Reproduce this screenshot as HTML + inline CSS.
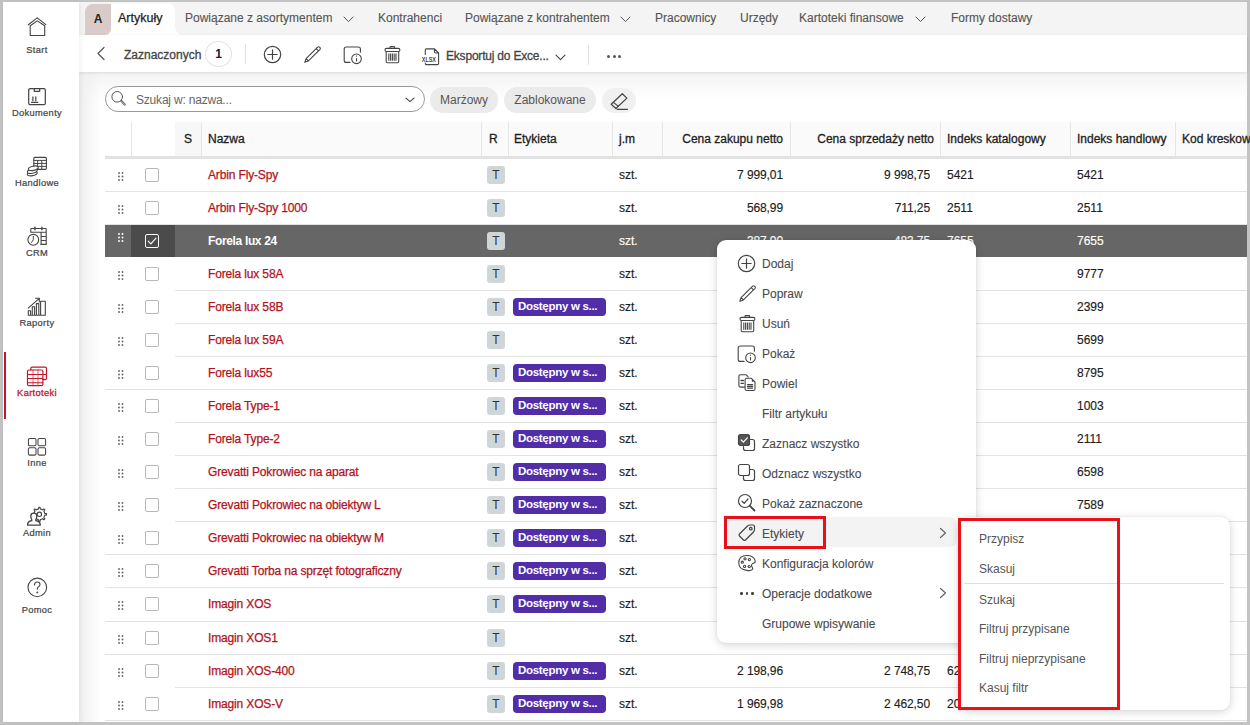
<!DOCTYPE html><html><head><meta charset="utf-8"><style>
*{margin:0;padding:0;box-sizing:border-box}
html,body{width:1250px;height:725px;overflow:hidden;background:#c3c3c3;font-family:"Liberation Sans", sans-serif;position:relative}
.a{position:absolute}
.t{position:absolute;white-space:nowrap;line-height:1}
</style></head><body>
<div class="a" style="left:3px;top:2px;width:1244px;height:720px;background:#fff;overflow:hidden"></div>
<div class="a" style="left:79px;top:72px;width:1168px;height:28px;background:linear-gradient(#f3f3f3,#fff)"></div>
<div class="a" style="left:79px;top:72px;width:22px;height:650px;background:linear-gradient(90deg,#efefef,rgba(255,255,255,0))"></div>
<div class="a" style="left:79px;top:2px;width:1168px;height:33px;background:#f4f4f4"></div>
<div class="a" style="left:104px;top:28px;width:8px;height:7px;background:#fff"></div>
<div class="a" style="left:85px;top:4px;width:26px;height:31px;background:#d8cbc9;border-radius:8px 0 6px 0"></div>
<div class="a" style="left:111px;top:3px;width:64px;height:32px;background:#fff;border-radius:0 8px 0 0"></div>
<div class="a" style="left:174px;top:27px;width:8px;height:8px;background:#fff"></div>
<div class="a" style="left:175px;top:3px;width:20px;height:32px;background:#f4f4f4;border-radius:0 0 0 8px"></div>
<div class="t" style="left:-102px;width:400px;text-align:center;top:12.80px;font-size:12px;color:#222;font-weight:bold;letter-spacing:0px;">A</div>
<div class="t" style="left:118px;top:11.88px;font-size:12.5px;color:#222;font-weight:normal;letter-spacing:0px;;-webkit-text-stroke:0.25px #222">Artykuły</div>
<div class="t" style="left:185px;top:12.30px;font-size:12px;color:#555;font-weight:normal;letter-spacing:0px;;-webkit-text-stroke:0.12px #555">Powiązane z asortymentem</div>
<svg class="a" style="left:342.5px;top:16px;" width="11" height="6.6" viewBox="0 0 11 6.6" fill="none" stroke="#555" stroke-width="1.0" stroke-linecap="round" stroke-linejoin="round"><path d="M1,1 L5.5,5.6 L10,1"/></svg>
<div class="t" style="left:378px;top:12.30px;font-size:12px;color:#555;font-weight:normal;letter-spacing:0px;;-webkit-text-stroke:0.12px #555">Kontrahenci</div>
<div class="t" style="left:465px;top:12.30px;font-size:12px;color:#555;font-weight:normal;letter-spacing:0px;;-webkit-text-stroke:0.12px #555">Powiązane z kontrahentem</div>
<svg class="a" style="left:619.5px;top:16px;" width="11" height="6.6" viewBox="0 0 11 6.6" fill="none" stroke="#555" stroke-width="1.0" stroke-linecap="round" stroke-linejoin="round"><path d="M1,1 L5.5,5.6 L10,1"/></svg>
<div class="t" style="left:655px;top:12.30px;font-size:12px;color:#555;font-weight:normal;letter-spacing:0px;;-webkit-text-stroke:0.12px #555">Pracownicy</div>
<div class="t" style="left:740px;top:12.30px;font-size:12px;color:#555;font-weight:normal;letter-spacing:0px;;-webkit-text-stroke:0.12px #555">Urzędy</div>
<div class="t" style="left:799px;top:12.30px;font-size:12px;color:#555;font-weight:normal;letter-spacing:0px;;-webkit-text-stroke:0.12px #555">Kartoteki finansowe</div>
<svg class="a" style="left:914.5px;top:16px;" width="11" height="6.6" viewBox="0 0 11 6.6" fill="none" stroke="#555" stroke-width="1.0" stroke-linecap="round" stroke-linejoin="round"><path d="M1,1 L5.5,5.6 L10,1"/></svg>
<div class="t" style="left:951px;top:12.30px;font-size:12px;color:#555;font-weight:normal;letter-spacing:0px;;-webkit-text-stroke:0.12px #555">Formy dostawy</div>
<div class="a" style="left:79px;top:35px;width:1168px;height:37px;background:#fff;box-shadow:0 1px 3px rgba(0,0,0,0.10)"></div>
<svg class="a" style="left:95px;top:46px;" width="12" height="15" viewBox="0 0 12 15" fill="none" stroke="#555" stroke-width="1.2" stroke-linecap="round" stroke-linejoin="round"><path d="M9,1.5 L3,7.5 L9,13.5"/></svg>
<div class="t" style="left:124px;top:48.60px;font-size:12px;color:#444;font-weight:normal;letter-spacing:0px;;-webkit-text-stroke:0.3px #444">Zaznaczonych</div>
<div class="a" style="left:205px;top:41px;width:27px;height:26px;border:1px solid #e3e3e3;border-radius:50%;background:#fff"></div>
<div class="t" style="left:18.5px;width:400px;text-align:center;top:48.30px;font-size:12px;color:#1b1b2b;font-weight:bold;letter-spacing:0px;">1</div>
<div class="a" style="left:245px;top:44px;width:1px;height:20px;background:#e0e0e0"></div>
<div class="a" style="left:588px;top:45px;width:1px;height:20px;background:#e0e0e0"></div>
<svg class="a" style="left:263px;top:45.2px;" width="19" height="19" viewBox="0 0 19 19" fill="none" stroke="#444" stroke-width="1.2" stroke-linecap="round" stroke-linejoin="round"><circle cx="9.5" cy="9.5" r="8.2"/><path d="M9.5,4.8 V14.2 M4.8,9.5 H14.2"/></svg>
<svg class="a" style="left:303px;top:46px;" width="18" height="18" viewBox="0 0 18 18" fill="none" stroke="#444" stroke-width="1.1" stroke-linecap="round" stroke-linejoin="round"><path d="M1.8,16.2 L3.1,12.6 L14.4,1.3 Q15.6,0.2 16.8,1.3 Q17.9,2.4 16.8,3.6 L5.4,14.9 Z M3.1,12.6 L5.4,14.9 M13.2,2.6 L15.5,4.9"/></svg>
<svg class="a" style="left:343px;top:45px;" width="19" height="20" viewBox="0 0 19 20" fill="none" stroke="#444" stroke-width="1.1" stroke-linecap="round" stroke-linejoin="round"><path d="M7,17.4 H3.2 Q1.2,17.4 1.2,15.4 V4 Q1.2,2 3.2,2 H15.4 Q17.4,2 17.4,4 V7.3"/><circle cx="13.5" cy="13.8" r="4.8"/><path d="M13.5,13.1 V16.4" stroke-linecap="butt"/><circle cx="13.5" cy="11.1" r="0.65" fill="#444" stroke="none"/></svg>
<svg class="a" style="left:384px;top:45px;" width="17" height="19" viewBox="0 0 17 19" fill="none" stroke="#444" stroke-width="1.1" stroke-linecap="round" stroke-linejoin="round"><rect x="1" y="3.4" width="14.9" height="3.1" rx="1.5"/><path d="M6,3.4 V2.3 Q6,1.6 6.7,1.6 H9.9 Q10.6,1.6 10.6,2.3 V3.4"/><path d="M2.2,6.5 V16.5 Q2.2,17.7 3.4,17.7 H13.5 Q14.7,17.7 14.7,16.5 V6.5"/><path d="M4.8,8.6 V15.8 M6.6,8.6 V15.8 M8.4,8.6 V15.8 M10.2,8.6 V15.8 M12,8.6 V15.8" stroke-width="1.1" stroke-linecap="butt"/></svg>
<svg class="a" style="left:421px;top:44px;" width="20" height="22" viewBox="0 0 20 22" fill="none" stroke="#444" stroke-width="1.1" stroke-linecap="round" stroke-linejoin="round"><path d="M4.3,10.5 V6 Q4.3,4.9 5.4,4.9 H13.5 L17.6,9 V19.5 Q17.6,20.6 16.5,20.6 H5.4 Q4.3,20.6 4.3,19.5 V19 M13.5,4.9 V7.8 Q13.5,9 14.7,9 H17.6"/><text x="0.8" y="17.7" font-family="Liberation Sans" font-weight="bold" font-size="7.2" fill="#444" stroke="none" textLength="14.2" lengthAdjust="spacingAndGlyphs">XLSX</text></svg>
<div class="t" style="left:446px;top:49.80px;font-size:12px;color:#444;font-weight:normal;letter-spacing:-0.2px;;-webkit-text-stroke:0.3px #444">Eksportuj do Exce...</div>
<svg class="a" style="left:555px;top:54px;" width="11" height="7" viewBox="0 0 11 7" fill="none" stroke="#444" stroke-width="1.1" stroke-linecap="round" stroke-linejoin="round"><path d="M1,1.2 L5.5,5.6 L10,1.2"/></svg>
<div class="a" style="left:607px;top:55.2px;width:3px;height:3px;border-radius:50%;background:#555"></div>
<div class="a" style="left:612.5px;top:55.2px;width:3px;height:3px;border-radius:50%;background:#555"></div>
<div class="a" style="left:618px;top:55.2px;width:3px;height:3px;border-radius:50%;background:#555"></div>
<div class="a" style="left:105px;top:86px;width:320px;height:26px;border:1px solid #9a9a9a;border-radius:13px;background:#fff"></div>
<svg class="a" style="left:111px;top:89px;" width="18" height="18" viewBox="0 0 18 18" fill="none" stroke="#555" stroke-width="1.0" stroke-linecap="round" stroke-linejoin="round"><circle cx="6.2" cy="7.8" r="5.3"/><path d="M10.2,11.8 L13.8,15.6" stroke-width="2.1"/><path d="M10.2,11.8 L13.8,15.6" stroke-width="0.6" stroke="#fff"/></svg>
<div class="t" style="left:136px;top:93.80px;font-size:12px;color:#666;font-weight:normal;letter-spacing:-0.2px;">Szukaj w: nazwa...</div>
<svg class="a" style="left:405px;top:97px;" width="10" height="6" viewBox="0 0 10 6" fill="none" stroke="#444" stroke-width="1.1" stroke-linecap="round" stroke-linejoin="round"><path d="M1,1.2 L5,4.6 L9,1.2"/></svg>
<div class="a" style="left:430px;top:87px;width:68px;height:26px;border-radius:13px;background:#ebebeb"></div>
<div class="t" style="left:264px;width:400px;text-align:center;top:94.30px;font-size:12px;color:#555;font-weight:normal;letter-spacing:0px;">Marżowy</div>
<div class="a" style="left:504px;top:87px;width:92px;height:26px;border-radius:13px;background:#ebebeb"></div>
<div class="t" style="left:350px;width:400px;text-align:center;top:94.30px;font-size:12px;color:#555;font-weight:normal;letter-spacing:0px;">Zablokowane</div>
<div class="a" style="left:602px;top:88px;width:34px;height:25px;border-radius:13px;background:#f0f0f0"></div>
<svg class="a" style="left:602px;top:86px;" width="36" height="28" viewBox="0 0 36 28" fill="none" stroke="#444" stroke-width="1.2" stroke-linecap="round" stroke-linejoin="round"><path d="M20.3,7.7 L24.9,12.1 L13.9,22.5 L9.2,18.3 Z M11.5,16.4 L16.3,20.4"/><path d="M15.2,23.4 H25.4"/></svg>
<div class="a" style="left:3px;top:2px;width:76px;height:720px;background:#fff;box-shadow:1px 0 6px rgba(0,0,0,0.07)"></div>
<svg class="a" style="left:26px;top:15px;" width="23" height="23" viewBox="0 0 23 23" fill="none" stroke="#444" stroke-width="1.1" stroke-linecap="round" stroke-linejoin="round"><path d="M2.3,9.8 L11.2,2.9 L19.9,9.6"/><path d="M4.2,20.5 V10.8 L11.2,5.9 L18.7,10.8 V20.5 Z"/></svg>
<div class="t" style="left:-163px;width:400px;text-align:center;top:46.09px;font-size:9.3px;color:#444;font-weight:normal;letter-spacing:0.35px;;-webkit-text-stroke:0.22px #444">Start</div>
<svg class="a" style="left:26px;top:86px;" width="22" height="22" viewBox="0 0 22 22" fill="none" stroke="#444" stroke-width="1.2" stroke-linecap="round" stroke-linejoin="round"><rect x="2.7" y="2.6" width="16.6" height="16" rx="1.3"/><path d="M8.3,2.6 V5.4 H13.7 V2.6"/><path d="M6.9,14.7 V10.9 M9.8,14.7 V10.9" stroke-width="1.2"/><path d="M5.5,16.4 H11.8" stroke-width="1.1"/></svg>
<div class="t" style="left:-163px;width:400px;text-align:center;top:109.09px;font-size:9.3px;color:#444;font-weight:normal;letter-spacing:0.35px;;-webkit-text-stroke:0.22px #444">Dokumenty</div>
<svg class="a" style="left:25px;top:155px;" width="24" height="23" viewBox="0 0 24 23" fill="none" stroke="#444" stroke-width="1.1" stroke-linecap="round" stroke-linejoin="round"><rect x="8.8" y="2.4" width="12.6" height="12" rx="1.2"/><path d="M8.8,5.4 H21.4 M8.8,8.4 H21.4 M8.8,11.4 H21.4 M12.6,5.4 V14.4 M16.8,5.4 V14.4" stroke-width="1"/><ellipse cx="7.3" cy="18.6" rx="5" ry="2.1" fill="#fff" transform="rotate(-12 7.3 18.6)"/><ellipse cx="7.3" cy="16.2" rx="5" ry="2.1" fill="#fff" transform="rotate(-12 7.3 16.2)"/><ellipse cx="8.3" cy="13.3" rx="5" ry="2.1" fill="#fff" transform="rotate(-12 8.3 13.3)"/></svg>
<div class="t" style="left:-163px;width:400px;text-align:center;top:179.09px;font-size:9.3px;color:#444;font-weight:normal;letter-spacing:0.35px;;-webkit-text-stroke:0.22px #444">Handlowe</div>
<svg class="a" style="left:25px;top:225px;" width="24" height="23" viewBox="0 0 24 23" fill="none" stroke="#444" stroke-width="1.1" stroke-linecap="round" stroke-linejoin="round"><path d="M5.8,7.3 V4.3 Q5.8,3.5 6.6,3.5 H20.4 Q21.2,3.5 21.2,4.3 V19.4 H15.8 M5.8,7.3 H21.2 M16.1,7.3 V19.4 M16.1,11.5 H21.2 M16.1,15.5 H21.2"/><path d="M9.9,2.2 V4.8 M16.9,2.2 V4.8" stroke-width="1.4"/><circle cx="8.3" cy="14.8" r="5.4" fill="#fff"/><path d="M8.3,11.4 V14.8 L6.6,17.4" stroke-width="1"/></svg>
<div class="t" style="left:-163px;width:400px;text-align:center;top:249.09px;font-size:9.3px;color:#444;font-weight:normal;letter-spacing:0.35px;;-webkit-text-stroke:0.22px #444">CRM</div>
<svg class="a" style="left:26px;top:296px;" width="22" height="22" viewBox="0 0 22 22" fill="none" stroke="#444" stroke-width="1.1" stroke-linecap="round" stroke-linejoin="round"><path d="M2.2,12.2 L13,2.6 M9.6,2.3 H13.3 V6"/><path d="M2.3,19.2 V14.8 H4.6 V19.2 M6.3,19.2 V10.8 H8.6 V19.2 M10.4,19.2 V7.6 H12.8 V19.2 M14.6,19.2 V5.3 H19.3 V19.2 M2.3,19.2 H19.3"/></svg>
<div class="t" style="left:-163px;width:400px;text-align:center;top:319.10px;font-size:9.3px;color:#444;font-weight:normal;letter-spacing:0.35px;;-webkit-text-stroke:0.22px #444">Raporty</div>
<div class="a" style="left:4px;top:352px;width:2px;height:67px;background:#c0182a"></div>
<svg class="a" style="left:26px;top:365px;" width="22" height="23" viewBox="0 0 22 23" fill="none" stroke="#c0182a" stroke-width="1.2" stroke-linecap="round" stroke-linejoin="round"><path d="M4.8,5 V3.6 Q4.8,2.2 6.2,2.2 H19.1 Q20.5,2.2 20.5,3.6 V13.2 Q20.5,14.6 19.1,14.6 H16.9 M16.9,9.5 H20.5"/><rect x="1.5" y="5" width="15.4" height="15.7" rx="1.5"/><path d="M1.5,9.5 H16.9 M1.5,13.5 H16.9 M1.5,17.7 H16.9" stroke-width="1.1"/><path d="M7,5 V20.7 M12,5 V20.7" stroke-width="0.9" stroke-opacity="0.75"/></svg>
<div class="t" style="left:-163px;width:400px;text-align:center;top:389.10px;font-size:9.3px;color:#c0182a;font-weight:normal;letter-spacing:0.35px;;-webkit-text-stroke:0.3px #c0182a">Kartoteki</div>
<svg class="a" style="left:26px;top:436px;" width="22" height="22" viewBox="0 0 22 22" fill="none" stroke="#444" stroke-width="1.05" stroke-linecap="round" stroke-linejoin="round"><rect x="2.4" y="2.4" width="7.6" height="7.4" rx="1.3"/><rect x="12" y="2.4" width="7.6" height="7.4" rx="1.3"/><rect x="2.4" y="11.7" width="7.6" height="7.4" rx="1.3"/><rect x="12" y="11.7" width="7.6" height="7.4" rx="1.3"/></svg>
<div class="t" style="left:-163px;width:400px;text-align:center;top:459.10px;font-size:9.3px;color:#444;font-weight:normal;letter-spacing:0.35px;;-webkit-text-stroke:0.22px #444">Inne</div>
<svg class="a" style="left:25px;top:505px;" width="24" height="23" viewBox="0 0 24 23" fill="none" stroke="#444" stroke-width="1.1" stroke-linecap="round" stroke-linejoin="round"><path d="M19.83,8.44 L21.47,8.63 L21.47,9.97 L19.83,10.16 L18.85,12.53 L19.87,13.83 L18.93,14.77 L17.63,13.75 L15.26,14.73 L15.07,16.37 L13.73,16.37 L13.54,14.73 L11.17,13.75 L9.87,14.77 L8.93,13.83 L9.95,12.53 L8.97,10.16 L7.33,9.97 L7.33,8.63 L8.97,8.44 L9.95,6.07 L8.93,4.77 L9.87,3.83 L11.17,4.85 L13.54,3.87 L13.73,2.23 L15.07,2.23 L15.26,3.87 L17.63,4.85 L18.93,3.83 L19.87,4.77 L18.85,6.07 Z"/><circle cx="14.4" cy="9.3" r="2.2"/><path d="M6.8,14.8 Q5.8,13 5.8,11 Q5.8,8.2 8.8,8.2 Q11.8,8.2 11.8,11 Q11.8,13 10.8,14.8 V15.5 Q15.2,16.5 15.2,19.5 V20.2 H2.6 V19.5 Q2.6,16.5 6.8,15.5 Z" fill="#fff" stroke-width="1.3"/></svg>
<div class="t" style="left:-163px;width:400px;text-align:center;top:529.10px;font-size:9.3px;color:#444;font-weight:normal;letter-spacing:0.35px;;-webkit-text-stroke:0.22px #444">Admin</div>
<svg class="a" style="left:26px;top:576px;" width="23" height="23" viewBox="0 0 23 23" fill="none" stroke="#444" stroke-width="1.1" stroke-linecap="round" stroke-linejoin="round"><circle cx="11.3" cy="11.4" r="9.3"/><path d="M8.5,9 Q8.5,6 11.3,6 Q14,6 14,8.6 Q14,10.3 12,11.3 Q11.3,11.7 11.3,13.3"/><circle cx="11.3" cy="16.4" r="0.4" fill="#444"/></svg>
<div class="t" style="left:-163px;width:400px;text-align:center;top:606.10px;font-size:9.3px;color:#444;font-weight:normal;letter-spacing:0.35px;;-webkit-text-stroke:0.22px #444">Pomoc</div>
<div class="a" style="left:105px;top:122px;width:1142px;height:34px;background:#fafafa"></div>
<div class="a" style="left:105px;top:122px;width:70px;height:34px;background:#fff"></div>
<div class="a" style="left:175px;top:122px;width:26px;height:34px;background:#f7f7f7"></div>
<div class="a" style="left:105px;top:156px;width:1142px;height:3px;background:#e2e2e2"></div>
<div class="a" style="left:131px;top:122px;width:1px;height:34px;background:#e6e6e6"></div>
<div class="a" style="left:201px;top:122px;width:1px;height:34px;background:#e6e6e6"></div>
<div class="a" style="left:481px;top:122px;width:1px;height:34px;background:#e6e6e6"></div>
<div class="a" style="left:508px;top:122px;width:1px;height:34px;background:#e6e6e6"></div>
<div class="a" style="left:612px;top:122px;width:1px;height:34px;background:#e6e6e6"></div>
<div class="a" style="left:662px;top:122px;width:1px;height:34px;background:#e6e6e6"></div>
<div class="a" style="left:790px;top:122px;width:1px;height:34px;background:#e6e6e6"></div>
<div class="a" style="left:940px;top:122px;width:1px;height:34px;background:#e6e6e6"></div>
<div class="a" style="left:1070px;top:122px;width:1px;height:34px;background:#e6e6e6"></div>
<div class="a" style="left:1175px;top:122px;width:1px;height:34px;background:#e6e6e6"></div>
<div class="t" style="left:184px;top:133.30px;font-size:12px;color:#1e1e1e;font-weight:normal;letter-spacing:0px;;-webkit-text-stroke:0.3px #1e1e1e">S</div>
<div class="t" style="left:208px;top:133.30px;font-size:12px;color:#1e1e1e;font-weight:normal;letter-spacing:0px;;-webkit-text-stroke:0.3px #1e1e1e">Nazwa</div>
<div class="t" style="left:489px;top:133.30px;font-size:12px;color:#1e1e1e;font-weight:normal;letter-spacing:0px;;-webkit-text-stroke:0.3px #1e1e1e">R</div>
<div class="t" style="left:514px;top:133.30px;font-size:12px;color:#1e1e1e;font-weight:normal;letter-spacing:0px;;-webkit-text-stroke:0.3px #1e1e1e">Etykieta</div>
<div class="t" style="left:619px;top:133.30px;font-size:12px;color:#1e1e1e;font-weight:normal;letter-spacing:0px;;-webkit-text-stroke:0.3px #1e1e1e">j.m</div>
<div class="t" style="left:383px;width:400px;text-align:right;top:133.30px;font-size:12px;color:#1e1e1e;font-weight:normal;letter-spacing:0px;;-webkit-text-stroke:0.3px #1e1e1e">Cena zakupu netto</div>
<div class="t" style="left:534px;width:400px;text-align:right;top:133.30px;font-size:12px;color:#1e1e1e;font-weight:normal;letter-spacing:0px;;-webkit-text-stroke:0.3px #1e1e1e">Cena sprzedaży netto</div>
<div class="t" style="left:947px;top:133.30px;font-size:12px;color:#1e1e1e;font-weight:normal;letter-spacing:0px;;-webkit-text-stroke:0.3px #1e1e1e">Indeks katalogowy</div>
<div class="t" style="left:1077px;top:133.30px;font-size:12px;color:#1e1e1e;font-weight:normal;letter-spacing:0px;;-webkit-text-stroke:0.3px #1e1e1e">Indeks handlowy</div>
<div class="t" style="left:1182px;top:133.30px;font-size:12px;color:#1e1e1e;font-weight:normal;letter-spacing:0px;;-webkit-text-stroke:0.3px #1e1e1e">Kod kreskowy</div>
<div class="a" style="left:105px;top:159px;width:1142px;height:33px;background:#ffffff"></div>
<div class="a" style="left:105px;top:191px;width:1142px;height:1px;background:#e3e3e3"></div>
<svg class="a" style="left:117px;top:171px" width="9" height="12" viewBox="0 0 9 12" fill="#666"><circle cx="2.0" cy="2.0" r="0.95"/><circle cx="5.5" cy="2.0" r="0.95"/><circle cx="2.0" cy="5.5" r="0.95"/><circle cx="5.5" cy="5.5" r="0.95"/><circle cx="2.0" cy="9.0" r="0.95"/><circle cx="5.5" cy="9.0" r="0.95"/></svg>
<div class="a" style="left:145px;top:168px;width:14px;height:14px;border:1px solid #b8b8b8;border-radius:2px;background:#fff"></div>
<div class="t" style="left:208px;top:168.80px;font-size:12px;color:#b3121c;font-weight:normal;letter-spacing:-0.15px;;-webkit-text-stroke:0.25px #b3121c">Arbin Fly-Spy</div>
<div class="a" style="left:487px;top:166px;width:18px;height:18px;border-radius:3px;background:#cfd6da"></div>
<div class="t" style="left:296px;width:400px;text-align:center;top:168.80px;font-size:12px;color:#333;font-weight:normal;letter-spacing:0px;">T</div>
<div class="t" style="left:619px;top:168.80px;font-size:12px;color:#1c1c1c;font-weight:normal;letter-spacing:0px;;-webkit-text-stroke:0.15px #1c1c1c">szt.</div>
<div class="t" style="left:383px;width:400px;text-align:right;top:168.80px;font-size:12px;color:#1c1c1c;font-weight:normal;letter-spacing:-0.1px;;-webkit-text-stroke:0.15px #1c1c1c">7 999,01</div>
<div class="t" style="left:530px;width:400px;text-align:right;top:168.80px;font-size:12px;color:#1c1c1c;font-weight:normal;letter-spacing:-0.1px;;-webkit-text-stroke:0.15px #1c1c1c">9 998,75</div>
<div class="t" style="left:947px;top:168.80px;font-size:12px;color:#1c1c1c;font-weight:normal;letter-spacing:0px;;-webkit-text-stroke:0.15px #1c1c1c">5421</div>
<div class="t" style="left:1077px;top:168.80px;font-size:12px;color:#1c1c1c;font-weight:normal;letter-spacing:0px;;-webkit-text-stroke:0.15px #1c1c1c">5421</div>
<div class="a" style="left:105px;top:192px;width:1142px;height:33px;background:#ffffff"></div>
<div class="a" style="left:105px;top:224px;width:1142px;height:1px;background:#e3e3e3"></div>
<svg class="a" style="left:117px;top:204px" width="9" height="12" viewBox="0 0 9 12" fill="#666"><circle cx="2.0" cy="2.0" r="0.95"/><circle cx="5.5" cy="2.0" r="0.95"/><circle cx="2.0" cy="5.5" r="0.95"/><circle cx="5.5" cy="5.5" r="0.95"/><circle cx="2.0" cy="9.0" r="0.95"/><circle cx="5.5" cy="9.0" r="0.95"/></svg>
<div class="a" style="left:145px;top:201px;width:14px;height:14px;border:1px solid #b8b8b8;border-radius:2px;background:#fff"></div>
<div class="t" style="left:208px;top:201.80px;font-size:12px;color:#b3121c;font-weight:normal;letter-spacing:-0.15px;;-webkit-text-stroke:0.25px #b3121c">Arbin Fly-Spy 1000</div>
<div class="a" style="left:487px;top:199px;width:18px;height:18px;border-radius:3px;background:#cfd6da"></div>
<div class="t" style="left:296px;width:400px;text-align:center;top:201.80px;font-size:12px;color:#333;font-weight:normal;letter-spacing:0px;">T</div>
<div class="t" style="left:619px;top:201.80px;font-size:12px;color:#1c1c1c;font-weight:normal;letter-spacing:0px;;-webkit-text-stroke:0.15px #1c1c1c">szt.</div>
<div class="t" style="left:383px;width:400px;text-align:right;top:201.80px;font-size:12px;color:#1c1c1c;font-weight:normal;letter-spacing:-0.1px;;-webkit-text-stroke:0.15px #1c1c1c">568,99</div>
<div class="t" style="left:530px;width:400px;text-align:right;top:201.80px;font-size:12px;color:#1c1c1c;font-weight:normal;letter-spacing:-0.1px;;-webkit-text-stroke:0.15px #1c1c1c">711,25</div>
<div class="t" style="left:947px;top:201.80px;font-size:12px;color:#1c1c1c;font-weight:normal;letter-spacing:0px;;-webkit-text-stroke:0.15px #1c1c1c">2511</div>
<div class="t" style="left:1077px;top:201.80px;font-size:12px;color:#1c1c1c;font-weight:normal;letter-spacing:0px;;-webkit-text-stroke:0.15px #1c1c1c">2511</div>
<div class="a" style="left:105px;top:225px;width:1142px;height:32px;background:#666666"></div>
<div class="a" style="left:131px;top:225px;width:44px;height:32px;background:#4b4b4b"></div>
<svg class="a" style="left:117px;top:231.5px" width="9" height="12" viewBox="0 0 9 12" fill="#fff"><circle cx="2.0" cy="2.0" r="0.95"/><circle cx="5.5" cy="2.0" r="0.95"/><circle cx="2.0" cy="5.5" r="0.95"/><circle cx="5.5" cy="5.5" r="0.95"/><circle cx="2.0" cy="9.0" r="0.95"/><circle cx="5.5" cy="9.0" r="0.95"/></svg>
<div class="a" style="left:145px;top:234px;width:14px;height:14px;border:1px solid #fff;border-radius:2px"></div>
<svg class="a" style="left:145px;top:234px;" width="14" height="14" viewBox="0 0 14 14" fill="none" stroke="#fff" stroke-width="1.1" stroke-linecap="round" stroke-linejoin="round"><path d="M3.2,7.2 L5.8,9.8 L11,4.2"/></svg>
<div class="t" style="left:208px;top:234.80px;font-size:12px;color:#fff;font-weight:bold;letter-spacing:-0.35px;">Forela lux 24</div>
<div class="a" style="left:487px;top:232px;width:18px;height:18px;border-radius:3px;background:#cfd6da"></div>
<div class="t" style="left:296px;width:400px;text-align:center;top:234.80px;font-size:12px;color:#333;font-weight:normal;letter-spacing:0px;">T</div>
<div class="t" style="left:619px;top:234.80px;font-size:12px;color:#fff;font-weight:normal;letter-spacing:0px;;-webkit-text-stroke:0.15px #fff">szt.</div>
<div class="t" style="left:383px;width:400px;text-align:right;top:234.80px;font-size:12px;color:#fff;font-weight:normal;letter-spacing:-0.1px;;-webkit-text-stroke:0.15px #fff">387,90</div>
<div class="t" style="left:530px;width:400px;text-align:right;top:234.80px;font-size:12px;color:#fff;font-weight:normal;letter-spacing:-0.1px;;-webkit-text-stroke:0.15px #fff">483,75</div>
<div class="t" style="left:947px;top:234.80px;font-size:12px;color:#fff;font-weight:normal;letter-spacing:0px;;-webkit-text-stroke:0.15px #fff">7655</div>
<div class="t" style="left:1077px;top:234.80px;font-size:12px;color:#fff;font-weight:normal;letter-spacing:0px;;-webkit-text-stroke:0.15px #fff">7655</div>
<div class="a" style="left:105px;top:258px;width:1142px;height:33px;background:#ffffff"></div>
<div class="a" style="left:175px;top:290px;width:1072px;height:1px;background:#e3e3e3"></div>
<svg class="a" style="left:117px;top:270px" width="9" height="12" viewBox="0 0 9 12" fill="#666"><circle cx="2.0" cy="2.0" r="0.95"/><circle cx="5.5" cy="2.0" r="0.95"/><circle cx="2.0" cy="5.5" r="0.95"/><circle cx="5.5" cy="5.5" r="0.95"/><circle cx="2.0" cy="9.0" r="0.95"/><circle cx="5.5" cy="9.0" r="0.95"/></svg>
<div class="a" style="left:145px;top:267px;width:14px;height:14px;border:1px solid #b8b8b8;border-radius:2px;background:#fff"></div>
<div class="t" style="left:208px;top:267.80px;font-size:12px;color:#b3121c;font-weight:normal;letter-spacing:-0.15px;;-webkit-text-stroke:0.25px #b3121c">Forela lux 58A</div>
<div class="a" style="left:487px;top:265px;width:18px;height:18px;border-radius:3px;background:#cfd6da"></div>
<div class="t" style="left:296px;width:400px;text-align:center;top:267.80px;font-size:12px;color:#333;font-weight:normal;letter-spacing:0px;">T</div>
<div class="t" style="left:619px;top:267.80px;font-size:12px;color:#1c1c1c;font-weight:normal;letter-spacing:0px;;-webkit-text-stroke:0.15px #1c1c1c">szt.</div>
<div class="t" style="left:1077px;top:267.80px;font-size:12px;color:#1c1c1c;font-weight:normal;letter-spacing:0px;;-webkit-text-stroke:0.15px #1c1c1c">9777</div>
<div class="a" style="left:105px;top:291px;width:1142px;height:33px;background:#ffffff"></div>
<div class="a" style="left:175px;top:323px;width:1072px;height:1px;background:#e3e3e3"></div>
<svg class="a" style="left:117px;top:303px" width="9" height="12" viewBox="0 0 9 12" fill="#666"><circle cx="2.0" cy="2.0" r="0.95"/><circle cx="5.5" cy="2.0" r="0.95"/><circle cx="2.0" cy="5.5" r="0.95"/><circle cx="5.5" cy="5.5" r="0.95"/><circle cx="2.0" cy="9.0" r="0.95"/><circle cx="5.5" cy="9.0" r="0.95"/></svg>
<div class="a" style="left:145px;top:300px;width:14px;height:14px;border:1px solid #b8b8b8;border-radius:2px;background:#fff"></div>
<div class="t" style="left:208px;top:300.80px;font-size:12px;color:#b3121c;font-weight:normal;letter-spacing:-0.15px;;-webkit-text-stroke:0.25px #b3121c">Forela lux 58B</div>
<div class="a" style="left:487px;top:298px;width:18px;height:18px;border-radius:3px;background:#cfd6da"></div>
<div class="t" style="left:296px;width:400px;text-align:center;top:300.80px;font-size:12px;color:#333;font-weight:normal;letter-spacing:0px;">T</div>
<div class="a" style="left:513px;top:298px;width:93px;height:18px;border-radius:4px;background:#512da8"></div>
<div class="t" style="left:518px;top:300.73px;font-size:11.5px;color:#fff;font-weight:bold;letter-spacing:-0.3px;">Dostępny w s...</div>
<div class="t" style="left:619px;top:300.80px;font-size:12px;color:#1c1c1c;font-weight:normal;letter-spacing:0px;;-webkit-text-stroke:0.15px #1c1c1c">szt.</div>
<div class="t" style="left:1077px;top:300.80px;font-size:12px;color:#1c1c1c;font-weight:normal;letter-spacing:0px;;-webkit-text-stroke:0.15px #1c1c1c">2399</div>
<div class="a" style="left:105px;top:324px;width:1142px;height:33px;background:#ffffff"></div>
<div class="a" style="left:175px;top:356px;width:1072px;height:1px;background:#e3e3e3"></div>
<svg class="a" style="left:117px;top:336px" width="9" height="12" viewBox="0 0 9 12" fill="#666"><circle cx="2.0" cy="2.0" r="0.95"/><circle cx="5.5" cy="2.0" r="0.95"/><circle cx="2.0" cy="5.5" r="0.95"/><circle cx="5.5" cy="5.5" r="0.95"/><circle cx="2.0" cy="9.0" r="0.95"/><circle cx="5.5" cy="9.0" r="0.95"/></svg>
<div class="a" style="left:145px;top:333px;width:14px;height:14px;border:1px solid #b8b8b8;border-radius:2px;background:#fff"></div>
<div class="t" style="left:208px;top:333.80px;font-size:12px;color:#b3121c;font-weight:normal;letter-spacing:-0.15px;;-webkit-text-stroke:0.25px #b3121c">Forela lux 59A</div>
<div class="a" style="left:487px;top:331px;width:18px;height:18px;border-radius:3px;background:#cfd6da"></div>
<div class="t" style="left:296px;width:400px;text-align:center;top:333.80px;font-size:12px;color:#333;font-weight:normal;letter-spacing:0px;">T</div>
<div class="t" style="left:619px;top:333.80px;font-size:12px;color:#1c1c1c;font-weight:normal;letter-spacing:0px;;-webkit-text-stroke:0.15px #1c1c1c">szt.</div>
<div class="t" style="left:1077px;top:333.80px;font-size:12px;color:#1c1c1c;font-weight:normal;letter-spacing:0px;;-webkit-text-stroke:0.15px #1c1c1c">5699</div>
<div class="a" style="left:105px;top:357px;width:1142px;height:33px;background:#ffffff"></div>
<div class="a" style="left:105px;top:389px;width:1142px;height:1px;background:#e3e3e3"></div>
<svg class="a" style="left:117px;top:369px" width="9" height="12" viewBox="0 0 9 12" fill="#666"><circle cx="2.0" cy="2.0" r="0.95"/><circle cx="5.5" cy="2.0" r="0.95"/><circle cx="2.0" cy="5.5" r="0.95"/><circle cx="5.5" cy="5.5" r="0.95"/><circle cx="2.0" cy="9.0" r="0.95"/><circle cx="5.5" cy="9.0" r="0.95"/></svg>
<div class="a" style="left:145px;top:366px;width:14px;height:14px;border:1px solid #b8b8b8;border-radius:2px;background:#fff"></div>
<div class="t" style="left:208px;top:366.80px;font-size:12px;color:#b3121c;font-weight:normal;letter-spacing:-0.15px;;-webkit-text-stroke:0.25px #b3121c">Forela lux55</div>
<div class="a" style="left:487px;top:364px;width:18px;height:18px;border-radius:3px;background:#cfd6da"></div>
<div class="t" style="left:296px;width:400px;text-align:center;top:366.80px;font-size:12px;color:#333;font-weight:normal;letter-spacing:0px;">T</div>
<div class="a" style="left:513px;top:364px;width:93px;height:18px;border-radius:4px;background:#512da8"></div>
<div class="t" style="left:518px;top:366.73px;font-size:11.5px;color:#fff;font-weight:bold;letter-spacing:-0.3px;">Dostępny w s...</div>
<div class="t" style="left:619px;top:366.80px;font-size:12px;color:#1c1c1c;font-weight:normal;letter-spacing:0px;;-webkit-text-stroke:0.15px #1c1c1c">szt.</div>
<div class="t" style="left:1077px;top:366.80px;font-size:12px;color:#1c1c1c;font-weight:normal;letter-spacing:0px;;-webkit-text-stroke:0.15px #1c1c1c">8795</div>
<div class="a" style="left:105px;top:390px;width:1142px;height:33px;background:#ffffff"></div>
<div class="a" style="left:175px;top:422px;width:1072px;height:1px;background:#e3e3e3"></div>
<svg class="a" style="left:117px;top:402px" width="9" height="12" viewBox="0 0 9 12" fill="#666"><circle cx="2.0" cy="2.0" r="0.95"/><circle cx="5.5" cy="2.0" r="0.95"/><circle cx="2.0" cy="5.5" r="0.95"/><circle cx="5.5" cy="5.5" r="0.95"/><circle cx="2.0" cy="9.0" r="0.95"/><circle cx="5.5" cy="9.0" r="0.95"/></svg>
<div class="a" style="left:145px;top:399px;width:14px;height:14px;border:1px solid #b8b8b8;border-radius:2px;background:#fff"></div>
<div class="t" style="left:208px;top:399.80px;font-size:12px;color:#b3121c;font-weight:normal;letter-spacing:-0.15px;;-webkit-text-stroke:0.25px #b3121c">Forela Type-1</div>
<div class="a" style="left:487px;top:397px;width:18px;height:18px;border-radius:3px;background:#cfd6da"></div>
<div class="t" style="left:296px;width:400px;text-align:center;top:399.80px;font-size:12px;color:#333;font-weight:normal;letter-spacing:0px;">T</div>
<div class="a" style="left:513px;top:397px;width:93px;height:18px;border-radius:4px;background:#512da8"></div>
<div class="t" style="left:518px;top:399.73px;font-size:11.5px;color:#fff;font-weight:bold;letter-spacing:-0.3px;">Dostępny w s...</div>
<div class="t" style="left:619px;top:399.80px;font-size:12px;color:#1c1c1c;font-weight:normal;letter-spacing:0px;;-webkit-text-stroke:0.15px #1c1c1c">szt.</div>
<div class="t" style="left:1077px;top:399.80px;font-size:12px;color:#1c1c1c;font-weight:normal;letter-spacing:0px;;-webkit-text-stroke:0.15px #1c1c1c">1003</div>
<div class="a" style="left:105px;top:423px;width:1142px;height:33px;background:#ffffff"></div>
<div class="a" style="left:175px;top:455px;width:1072px;height:1px;background:#e3e3e3"></div>
<svg class="a" style="left:117px;top:435px" width="9" height="12" viewBox="0 0 9 12" fill="#666"><circle cx="2.0" cy="2.0" r="0.95"/><circle cx="5.5" cy="2.0" r="0.95"/><circle cx="2.0" cy="5.5" r="0.95"/><circle cx="5.5" cy="5.5" r="0.95"/><circle cx="2.0" cy="9.0" r="0.95"/><circle cx="5.5" cy="9.0" r="0.95"/></svg>
<div class="a" style="left:145px;top:432px;width:14px;height:14px;border:1px solid #b8b8b8;border-radius:2px;background:#fff"></div>
<div class="t" style="left:208px;top:432.80px;font-size:12px;color:#b3121c;font-weight:normal;letter-spacing:-0.15px;;-webkit-text-stroke:0.25px #b3121c">Forela Type-2</div>
<div class="a" style="left:487px;top:430px;width:18px;height:18px;border-radius:3px;background:#cfd6da"></div>
<div class="t" style="left:296px;width:400px;text-align:center;top:432.80px;font-size:12px;color:#333;font-weight:normal;letter-spacing:0px;">T</div>
<div class="a" style="left:513px;top:430px;width:93px;height:18px;border-radius:4px;background:#512da8"></div>
<div class="t" style="left:518px;top:432.73px;font-size:11.5px;color:#fff;font-weight:bold;letter-spacing:-0.3px;">Dostępny w s...</div>
<div class="t" style="left:619px;top:432.80px;font-size:12px;color:#1c1c1c;font-weight:normal;letter-spacing:0px;;-webkit-text-stroke:0.15px #1c1c1c">szt.</div>
<div class="t" style="left:1077px;top:432.80px;font-size:12px;color:#1c1c1c;font-weight:normal;letter-spacing:0px;;-webkit-text-stroke:0.15px #1c1c1c">2111</div>
<div class="a" style="left:105px;top:456px;width:1142px;height:33px;background:#ffffff"></div>
<div class="a" style="left:175px;top:488px;width:1072px;height:1px;background:#e3e3e3"></div>
<svg class="a" style="left:117px;top:468px" width="9" height="12" viewBox="0 0 9 12" fill="#666"><circle cx="2.0" cy="2.0" r="0.95"/><circle cx="5.5" cy="2.0" r="0.95"/><circle cx="2.0" cy="5.5" r="0.95"/><circle cx="5.5" cy="5.5" r="0.95"/><circle cx="2.0" cy="9.0" r="0.95"/><circle cx="5.5" cy="9.0" r="0.95"/></svg>
<div class="a" style="left:145px;top:465px;width:14px;height:14px;border:1px solid #b8b8b8;border-radius:2px;background:#fff"></div>
<div class="t" style="left:208px;top:465.80px;font-size:12px;color:#b3121c;font-weight:normal;letter-spacing:-0.15px;;-webkit-text-stroke:0.25px #b3121c">Grevatti Pokrowiec na aparat</div>
<div class="a" style="left:487px;top:463px;width:18px;height:18px;border-radius:3px;background:#cfd6da"></div>
<div class="t" style="left:296px;width:400px;text-align:center;top:465.80px;font-size:12px;color:#333;font-weight:normal;letter-spacing:0px;">T</div>
<div class="a" style="left:513px;top:463px;width:93px;height:18px;border-radius:4px;background:#512da8"></div>
<div class="t" style="left:518px;top:465.73px;font-size:11.5px;color:#fff;font-weight:bold;letter-spacing:-0.3px;">Dostępny w s...</div>
<div class="t" style="left:619px;top:465.80px;font-size:12px;color:#1c1c1c;font-weight:normal;letter-spacing:0px;;-webkit-text-stroke:0.15px #1c1c1c">szt.</div>
<div class="t" style="left:1077px;top:465.80px;font-size:12px;color:#1c1c1c;font-weight:normal;letter-spacing:0px;;-webkit-text-stroke:0.15px #1c1c1c">6598</div>
<div class="a" style="left:105px;top:489px;width:1142px;height:33px;background:#ffffff"></div>
<div class="a" style="left:175px;top:521px;width:1072px;height:1px;background:#e3e3e3"></div>
<svg class="a" style="left:117px;top:501px" width="9" height="12" viewBox="0 0 9 12" fill="#666"><circle cx="2.0" cy="2.0" r="0.95"/><circle cx="5.5" cy="2.0" r="0.95"/><circle cx="2.0" cy="5.5" r="0.95"/><circle cx="5.5" cy="5.5" r="0.95"/><circle cx="2.0" cy="9.0" r="0.95"/><circle cx="5.5" cy="9.0" r="0.95"/></svg>
<div class="a" style="left:145px;top:498px;width:14px;height:14px;border:1px solid #b8b8b8;border-radius:2px;background:#fff"></div>
<div class="t" style="left:208px;top:498.80px;font-size:12px;color:#b3121c;font-weight:normal;letter-spacing:-0.15px;;-webkit-text-stroke:0.25px #b3121c">Grevatti Pokrowiec na obiektyw L</div>
<div class="a" style="left:487px;top:496px;width:18px;height:18px;border-radius:3px;background:#cfd6da"></div>
<div class="t" style="left:296px;width:400px;text-align:center;top:498.80px;font-size:12px;color:#333;font-weight:normal;letter-spacing:0px;">T</div>
<div class="a" style="left:513px;top:496px;width:93px;height:18px;border-radius:4px;background:#512da8"></div>
<div class="t" style="left:518px;top:498.73px;font-size:11.5px;color:#fff;font-weight:bold;letter-spacing:-0.3px;">Dostępny w s...</div>
<div class="t" style="left:619px;top:498.80px;font-size:12px;color:#1c1c1c;font-weight:normal;letter-spacing:0px;;-webkit-text-stroke:0.15px #1c1c1c">szt.</div>
<div class="t" style="left:1077px;top:498.80px;font-size:12px;color:#1c1c1c;font-weight:normal;letter-spacing:0px;;-webkit-text-stroke:0.15px #1c1c1c">7589</div>
<div class="a" style="left:105px;top:522px;width:1142px;height:33px;background:#ffffff"></div>
<div class="a" style="left:105px;top:554px;width:1142px;height:1px;background:#e3e3e3"></div>
<svg class="a" style="left:117px;top:534px" width="9" height="12" viewBox="0 0 9 12" fill="#666"><circle cx="2.0" cy="2.0" r="0.95"/><circle cx="5.5" cy="2.0" r="0.95"/><circle cx="2.0" cy="5.5" r="0.95"/><circle cx="5.5" cy="5.5" r="0.95"/><circle cx="2.0" cy="9.0" r="0.95"/><circle cx="5.5" cy="9.0" r="0.95"/></svg>
<div class="a" style="left:145px;top:531px;width:14px;height:14px;border:1px solid #b8b8b8;border-radius:2px;background:#fff"></div>
<div class="t" style="left:208px;top:531.80px;font-size:12px;color:#b3121c;font-weight:normal;letter-spacing:-0.15px;;-webkit-text-stroke:0.25px #b3121c">Grevatti Pokrowiec na obiektyw M</div>
<div class="a" style="left:487px;top:529px;width:18px;height:18px;border-radius:3px;background:#cfd6da"></div>
<div class="t" style="left:296px;width:400px;text-align:center;top:531.80px;font-size:12px;color:#333;font-weight:normal;letter-spacing:0px;">T</div>
<div class="a" style="left:513px;top:529px;width:93px;height:18px;border-radius:4px;background:#512da8"></div>
<div class="t" style="left:518px;top:531.73px;font-size:11.5px;color:#fff;font-weight:bold;letter-spacing:-0.3px;">Dostępny w s...</div>
<div class="t" style="left:619px;top:531.80px;font-size:12px;color:#1c1c1c;font-weight:normal;letter-spacing:0px;;-webkit-text-stroke:0.15px #1c1c1c">szt.</div>
<div class="a" style="left:105px;top:555px;width:1142px;height:33px;background:#ffffff"></div>
<div class="a" style="left:105px;top:587px;width:1142px;height:1px;background:#e3e3e3"></div>
<svg class="a" style="left:117px;top:567px" width="9" height="12" viewBox="0 0 9 12" fill="#666"><circle cx="2.0" cy="2.0" r="0.95"/><circle cx="5.5" cy="2.0" r="0.95"/><circle cx="2.0" cy="5.5" r="0.95"/><circle cx="5.5" cy="5.5" r="0.95"/><circle cx="2.0" cy="9.0" r="0.95"/><circle cx="5.5" cy="9.0" r="0.95"/></svg>
<div class="a" style="left:145px;top:564px;width:14px;height:14px;border:1px solid #b8b8b8;border-radius:2px;background:#fff"></div>
<div class="t" style="left:208px;top:564.80px;font-size:12px;color:#b3121c;font-weight:normal;letter-spacing:-0.15px;;-webkit-text-stroke:0.25px #b3121c">Grevatti Torba na sprzęt fotograficzny</div>
<div class="a" style="left:487px;top:562px;width:18px;height:18px;border-radius:3px;background:#cfd6da"></div>
<div class="t" style="left:296px;width:400px;text-align:center;top:564.80px;font-size:12px;color:#333;font-weight:normal;letter-spacing:0px;">T</div>
<div class="a" style="left:513px;top:562px;width:93px;height:18px;border-radius:4px;background:#512da8"></div>
<div class="t" style="left:518px;top:564.73px;font-size:11.5px;color:#fff;font-weight:bold;letter-spacing:-0.3px;">Dostępny w s...</div>
<div class="t" style="left:619px;top:564.80px;font-size:12px;color:#1c1c1c;font-weight:normal;letter-spacing:0px;;-webkit-text-stroke:0.15px #1c1c1c">szt.</div>
<div class="a" style="left:105px;top:588px;width:1142px;height:34px;background:#ffffff"></div>
<div class="a" style="left:105px;top:621px;width:1142px;height:1px;background:#e3e3e3"></div>
<svg class="a" style="left:117px;top:600px" width="9" height="12" viewBox="0 0 9 12" fill="#666"><circle cx="2.0" cy="2.0" r="0.95"/><circle cx="5.5" cy="2.0" r="0.95"/><circle cx="2.0" cy="5.5" r="0.95"/><circle cx="5.5" cy="5.5" r="0.95"/><circle cx="2.0" cy="9.0" r="0.95"/><circle cx="5.5" cy="9.0" r="0.95"/></svg>
<div class="a" style="left:145px;top:597px;width:14px;height:14px;border:1px solid #b8b8b8;border-radius:2px;background:#fff"></div>
<div class="t" style="left:208px;top:597.80px;font-size:12px;color:#b3121c;font-weight:normal;letter-spacing:-0.15px;;-webkit-text-stroke:0.25px #b3121c">Imagin XOS</div>
<div class="a" style="left:487px;top:595px;width:18px;height:18px;border-radius:3px;background:#cfd6da"></div>
<div class="t" style="left:296px;width:400px;text-align:center;top:597.80px;font-size:12px;color:#333;font-weight:normal;letter-spacing:0px;">T</div>
<div class="a" style="left:513px;top:595px;width:93px;height:18px;border-radius:4px;background:#512da8"></div>
<div class="t" style="left:518px;top:597.73px;font-size:11.5px;color:#fff;font-weight:bold;letter-spacing:-0.3px;">Dostępny w s...</div>
<div class="t" style="left:619px;top:597.80px;font-size:12px;color:#1c1c1c;font-weight:normal;letter-spacing:0px;;-webkit-text-stroke:0.15px #1c1c1c">szt.</div>
<div class="a" style="left:105px;top:622px;width:1142px;height:33px;background:#ffffff"></div>
<div class="a" style="left:105px;top:654px;width:1142px;height:1px;background:#e3e3e3"></div>
<svg class="a" style="left:117px;top:634px" width="9" height="12" viewBox="0 0 9 12" fill="#666"><circle cx="2.0" cy="2.0" r="0.95"/><circle cx="5.5" cy="2.0" r="0.95"/><circle cx="2.0" cy="5.5" r="0.95"/><circle cx="5.5" cy="5.5" r="0.95"/><circle cx="2.0" cy="9.0" r="0.95"/><circle cx="5.5" cy="9.0" r="0.95"/></svg>
<div class="a" style="left:145px;top:631px;width:14px;height:14px;border:1px solid #b8b8b8;border-radius:2px;background:#fff"></div>
<div class="t" style="left:208px;top:631.80px;font-size:12px;color:#b3121c;font-weight:normal;letter-spacing:-0.15px;;-webkit-text-stroke:0.25px #b3121c">Imagin XOS1</div>
<div class="a" style="left:487px;top:629px;width:18px;height:18px;border-radius:3px;background:#cfd6da"></div>
<div class="t" style="left:296px;width:400px;text-align:center;top:631.80px;font-size:12px;color:#333;font-weight:normal;letter-spacing:0px;">T</div>
<div class="t" style="left:619px;top:631.80px;font-size:12px;color:#1c1c1c;font-weight:normal;letter-spacing:0px;;-webkit-text-stroke:0.15px #1c1c1c">szt.</div>
<div class="a" style="left:105px;top:655px;width:1142px;height:33px;background:#ffffff"></div>
<div class="a" style="left:175px;top:687px;width:1072px;height:1px;background:#e3e3e3"></div>
<svg class="a" style="left:117px;top:667px" width="9" height="12" viewBox="0 0 9 12" fill="#666"><circle cx="2.0" cy="2.0" r="0.95"/><circle cx="5.5" cy="2.0" r="0.95"/><circle cx="2.0" cy="5.5" r="0.95"/><circle cx="5.5" cy="5.5" r="0.95"/><circle cx="2.0" cy="9.0" r="0.95"/><circle cx="5.5" cy="9.0" r="0.95"/></svg>
<div class="a" style="left:145px;top:664px;width:14px;height:14px;border:1px solid #b8b8b8;border-radius:2px;background:#fff"></div>
<div class="t" style="left:208px;top:664.80px;font-size:12px;color:#b3121c;font-weight:normal;letter-spacing:-0.15px;;-webkit-text-stroke:0.25px #b3121c">Imagin XOS-400</div>
<div class="a" style="left:487px;top:662px;width:18px;height:18px;border-radius:3px;background:#cfd6da"></div>
<div class="t" style="left:296px;width:400px;text-align:center;top:664.80px;font-size:12px;color:#333;font-weight:normal;letter-spacing:0px;">T</div>
<div class="a" style="left:513px;top:662px;width:93px;height:18px;border-radius:4px;background:#512da8"></div>
<div class="t" style="left:518px;top:664.73px;font-size:11.5px;color:#fff;font-weight:bold;letter-spacing:-0.3px;">Dostępny w s...</div>
<div class="t" style="left:619px;top:664.80px;font-size:12px;color:#1c1c1c;font-weight:normal;letter-spacing:0px;;-webkit-text-stroke:0.15px #1c1c1c">szt.</div>
<div class="t" style="left:383px;width:400px;text-align:right;top:664.80px;font-size:12px;color:#1c1c1c;font-weight:normal;letter-spacing:-0.1px;;-webkit-text-stroke:0.15px #1c1c1c">2 198,96</div>
<div class="t" style="left:530px;width:400px;text-align:right;top:664.80px;font-size:12px;color:#1c1c1c;font-weight:normal;letter-spacing:-0.1px;;-webkit-text-stroke:0.15px #1c1c1c">2 748,75</div>
<div class="t" style="left:947px;top:664.80px;font-size:12px;color:#1c1c1c;font-weight:normal;letter-spacing:0px;;-webkit-text-stroke:0.15px #1c1c1c">6251</div>
<div class="a" style="left:105px;top:688px;width:1142px;height:33px;background:#ffffff"></div>
<div class="a" style="left:105px;top:720px;width:1142px;height:1px;background:#e3e3e3"></div>
<svg class="a" style="left:117px;top:700px" width="9" height="12" viewBox="0 0 9 12" fill="#666"><circle cx="2.0" cy="2.0" r="0.95"/><circle cx="5.5" cy="2.0" r="0.95"/><circle cx="2.0" cy="5.5" r="0.95"/><circle cx="5.5" cy="5.5" r="0.95"/><circle cx="2.0" cy="9.0" r="0.95"/><circle cx="5.5" cy="9.0" r="0.95"/></svg>
<div class="a" style="left:145px;top:697px;width:14px;height:14px;border:1px solid #b8b8b8;border-radius:2px;background:#fff"></div>
<div class="t" style="left:208px;top:697.80px;font-size:12px;color:#b3121c;font-weight:normal;letter-spacing:-0.15px;;-webkit-text-stroke:0.25px #b3121c">Imagin XOS-V</div>
<div class="a" style="left:487px;top:695px;width:18px;height:18px;border-radius:3px;background:#cfd6da"></div>
<div class="t" style="left:296px;width:400px;text-align:center;top:697.80px;font-size:12px;color:#333;font-weight:normal;letter-spacing:0px;">T</div>
<div class="a" style="left:513px;top:695px;width:93px;height:18px;border-radius:4px;background:#512da8"></div>
<div class="t" style="left:518px;top:697.73px;font-size:11.5px;color:#fff;font-weight:bold;letter-spacing:-0.3px;">Dostępny w s...</div>
<div class="t" style="left:619px;top:697.80px;font-size:12px;color:#1c1c1c;font-weight:normal;letter-spacing:0px;;-webkit-text-stroke:0.15px #1c1c1c">szt.</div>
<div class="t" style="left:383px;width:400px;text-align:right;top:697.80px;font-size:12px;color:#1c1c1c;font-weight:normal;letter-spacing:-0.1px;;-webkit-text-stroke:0.15px #1c1c1c">1 969,98</div>
<div class="t" style="left:530px;width:400px;text-align:right;top:697.80px;font-size:12px;color:#1c1c1c;font-weight:normal;letter-spacing:-0.1px;;-webkit-text-stroke:0.15px #1c1c1c">2 462,50</div>
<div class="t" style="left:947px;top:697.80px;font-size:12px;color:#1c1c1c;font-weight:normal;letter-spacing:0px;;-webkit-text-stroke:0.15px #1c1c1c">2011</div>
<div class="a" style="left:717px;top:240px;width:259px;height:403px;background:#fff;border-radius:9px;box-shadow:0 2px 10px rgba(0,0,0,0.16),0 0 2px rgba(0,0,0,0.08)"></div>
<div class="a" style="left:725px;top:517px;width:232px;height:30px;background:#f3f3f3;border-radius:7px"></div>
<div class="t" style="left:762px;top:257.80px;font-size:12px;color:#4a4a4a;font-weight:normal;letter-spacing:0px;;-webkit-text-stroke:0.1px #4a4a4a">Dodaj</div>
<div class="t" style="left:762px;top:287.80px;font-size:12px;color:#4a4a4a;font-weight:normal;letter-spacing:0px;;-webkit-text-stroke:0.1px #4a4a4a">Popraw</div>
<div class="t" style="left:762px;top:317.80px;font-size:12px;color:#4a4a4a;font-weight:normal;letter-spacing:0px;;-webkit-text-stroke:0.1px #4a4a4a">Usuń</div>
<div class="t" style="left:762px;top:347.80px;font-size:12px;color:#4a4a4a;font-weight:normal;letter-spacing:0px;;-webkit-text-stroke:0.1px #4a4a4a">Pokaż</div>
<div class="t" style="left:762px;top:377.80px;font-size:12px;color:#4a4a4a;font-weight:normal;letter-spacing:0px;;-webkit-text-stroke:0.1px #4a4a4a">Powiel</div>
<div class="t" style="left:762px;top:407.80px;font-size:12px;color:#4a4a4a;font-weight:normal;letter-spacing:0px;;-webkit-text-stroke:0.1px #4a4a4a">Filtr artykułu</div>
<div class="t" style="left:762px;top:437.80px;font-size:12px;color:#4a4a4a;font-weight:normal;letter-spacing:0px;;-webkit-text-stroke:0.1px #4a4a4a">Zaznacz wszystko</div>
<div class="t" style="left:762px;top:467.80px;font-size:12px;color:#4a4a4a;font-weight:normal;letter-spacing:0px;;-webkit-text-stroke:0.1px #4a4a4a">Odznacz wszystko</div>
<div class="t" style="left:762px;top:497.80px;font-size:12px;color:#4a4a4a;font-weight:normal;letter-spacing:0px;;-webkit-text-stroke:0.1px #4a4a4a">Pokaż zaznaczone</div>
<div class="t" style="left:762px;top:527.80px;font-size:12px;color:#4a4a4a;font-weight:normal;letter-spacing:0px;;-webkit-text-stroke:0.1px #4a4a4a">Etykiety</div>
<div class="t" style="left:762px;top:557.80px;font-size:12px;color:#4a4a4a;font-weight:normal;letter-spacing:0px;;-webkit-text-stroke:0.1px #4a4a4a">Konfiguracja kolorów</div>
<div class="t" style="left:762px;top:587.80px;font-size:12px;color:#4a4a4a;font-weight:normal;letter-spacing:0px;;-webkit-text-stroke:0.1px #4a4a4a">Operacje dodatkowe</div>
<div class="t" style="left:762px;top:617.80px;font-size:12px;color:#4a4a4a;font-weight:normal;letter-spacing:0px;;-webkit-text-stroke:0.1px #4a4a4a">Grupowe wpisywanie</div>
<svg class="a" style="left:737px;top:254px;" width="19" height="19" viewBox="0 0 19 19" fill="none" stroke="#444" stroke-width="1.2" stroke-linecap="round" stroke-linejoin="round"><circle cx="9.5" cy="9.5" r="8.2"/><path d="M9.5,4.8 V14.2 M4.8,9.5 H14.2"/></svg>
<svg class="a" style="left:738px;top:285px;" width="18" height="18" viewBox="0 0 18 18" fill="none" stroke="#444" stroke-width="1.1" stroke-linecap="round" stroke-linejoin="round"><path d="M1.8,16.2 L3.1,12.6 L14.4,1.3 Q15.6,0.2 16.8,1.3 Q17.9,2.4 16.8,3.6 L5.4,14.9 Z M3.1,12.6 L5.4,14.9 M13.2,2.6 L15.5,4.9"/></svg>
<svg class="a" style="left:739px;top:314px;" width="17" height="19" viewBox="0 0 17 19" fill="none" stroke="#444" stroke-width="1.1" stroke-linecap="round" stroke-linejoin="round"><rect x="1" y="3.4" width="14.9" height="3.1" rx="1.5"/><path d="M6,3.4 V2.3 Q6,1.6 6.7,1.6 H9.9 Q10.6,1.6 10.6,2.3 V3.4"/><path d="M2.2,6.5 V16.5 Q2.2,17.7 3.4,17.7 H13.5 Q14.7,17.7 14.7,16.5 V6.5"/><path d="M4.8,8.6 V15.8 M6.6,8.6 V15.8 M8.4,8.6 V15.8 M10.2,8.6 V15.8 M12,8.6 V15.8" stroke-width="1.1" stroke-linecap="butt"/></svg>
<svg class="a" style="left:737px;top:344px;" width="19" height="20" viewBox="0 0 19 20" fill="none" stroke="#444" stroke-width="1.1" stroke-linecap="round" stroke-linejoin="round"><path d="M7,17.4 H3.2 Q1.2,17.4 1.2,15.4 V4 Q1.2,2 3.2,2 H15.4 Q17.4,2 17.4,4 V7.3"/><circle cx="13.5" cy="13.8" r="4.8"/><path d="M13.5,13.1 V16.4" stroke-linecap="butt"/><circle cx="13.5" cy="11.1" r="0.65" fill="#444" stroke="none"/></svg>
<svg class="a" style="left:737px;top:374px;" width="19" height="19" viewBox="0 0 19 19" fill="none" stroke="#444" stroke-width="1.1" stroke-linecap="round" stroke-linejoin="round"><path d="M8.1,13.1 H3.5 Q1.9,13.1 1.9,11.5 V2.4 Q1.9,0.8 3.5,0.8 H8.5 Q9.5,0.8 10.3,1.8 L11.2,2.9"/><path d="M4,6.5 H6.5 M4,9.3 H6.5" stroke-width="1.3"/><path d="M8.1,5.9 Q8.1,4.3 9.7,4.3 H14.3 L18,8 V15 Q18,16.5 16.5,16.5 H9.7 Q8.1,16.5 8.1,15 Z" fill="#fff"/><circle cx="15.6" cy="6.9" r="0.9" fill="#444" stroke="none"/><path d="M10.5,10.6 H15.6 M10.5,12.4 H15.6 M10.5,14.1 H15.6" stroke-width="1.1"/></svg>
<svg class="a" style="left:737px;top:433px;" width="19" height="19" viewBox="0 0 19 19" fill="none" stroke="#444" stroke-width="1.2" stroke-linecap="round" stroke-linejoin="round"><rect x="1.5" y="1.5" width="11" height="11" rx="2" fill="#555"/><path d="M4.2,7 L6.4,9.2 L10.3,4.8" stroke="#fff" stroke-width="1.2"/><path d="M13.5,6.5 H15.5 Q17.5,6.5 17.5,8.5 V15.5 Q17.5,17.5 15.5,17.5 H8.5 Q6.5,17.5 6.5,15.5 V13.5"/></svg>
<svg class="a" style="left:737px;top:463px;" width="19" height="19" viewBox="0 0 19 19" fill="none" stroke="#444" stroke-width="1.2" stroke-linecap="round" stroke-linejoin="round"><rect x="1.5" y="1.5" width="11" height="11" rx="2"/><path d="M12.5,6.5 H15.5 Q17.5,6.5 17.5,8.5 V15.5 Q17.5,17.5 15.5,17.5 H8.5 Q6.5,17.5 6.5,15.5 V12.5"/></svg>
<svg class="a" style="left:737px;top:493px;" width="19" height="19" viewBox="0 0 19 19" fill="none" stroke="#444" stroke-width="1.2" stroke-linecap="round" stroke-linejoin="round"><circle cx="8" cy="8" r="6.5"/><path d="M12.8,12.8 L17.5,17.5" stroke-width="1.8"/><path d="M5,8.2 L7.2,10.3 L11,6"/></svg>
<svg class="a" style="left:737px;top:523px;" width="19" height="19" viewBox="0 0 19 19" fill="none" stroke="#444" stroke-width="1.2" stroke-linecap="round" stroke-linejoin="round"><path d="M2.5,11 L10.5,3 Q11.5,2 13,2 H16 Q17.5,2 17.5,3.5 V6.5 Q17.5,8 16.5,9 L8.5,17 Q7.5,18 6.5,17 L2.5,13 Q1.5,12 2.5,11 Z"/><circle cx="13.8" cy="5.7" r="1.3"/></svg>
<svg class="a" style="left:737px;top:553px;" width="20" height="20" viewBox="0 0 20 20" fill="none" stroke="#444" stroke-width="1.1" stroke-linecap="round" stroke-linejoin="round"><path d="M9.5,2.5 Q17,2.5 18.2,8 Q18.5,9.8 16.5,10.3 Q14.5,10.8 14.5,12.5 Q14.5,13.5 15.3,14.3 Q16.5,15.8 14.5,17 Q12.5,17.9 9.8,17.4 Q1.8,16.5 1.8,10 Q1.8,2.5 9.5,2.5 Z"/><circle cx="8" cy="5.8" r="1.1"/><circle cx="12.4" cy="6.6" r="1.1"/><circle cx="5.3" cy="9.2" r="1.1"/><circle cx="7.6" cy="13.4" r="1.1"/><circle cx="12.2" cy="13.6" r="1.1"/></svg>
<div class="a" style="left:740.0px;top:592px;width:2.6px;height:2.6px;border-radius:50%;background:#444"></div>
<div class="a" style="left:745.5px;top:592px;width:2.6px;height:2.6px;border-radius:50%;background:#444"></div>
<div class="a" style="left:751.0px;top:592px;width:2.6px;height:2.6px;border-radius:50%;background:#444"></div>
<svg class="a" style="left:939px;top:527px;" width="9" height="12" viewBox="0 0 9 12" fill="none" stroke="#666" stroke-width="1.2" stroke-linecap="round" stroke-linejoin="round"><path d="M1.5,1.5 L6.5,6 L1.5,10.5"/></svg>
<svg class="a" style="left:939px;top:587px;" width="9" height="12" viewBox="0 0 9 12" fill="none" stroke="#666" stroke-width="1.2" stroke-linecap="round" stroke-linejoin="round"><path d="M1.5,1.5 L6.5,6 L1.5,10.5"/></svg>
<div class="a" style="left:724px;top:516px;width:102px;height:33px;border:3px solid #e8111a"></div>
<div class="a" style="left:958px;top:517px;width:272px;height:193px;background:#fff;border-radius:9px;box-shadow:0 2px 10px rgba(0,0,0,0.16),0 0 2px rgba(0,0,0,0.08)"></div>
<div class="a" style="left:964px;top:583px;width:260px;height:1px;background:#dedede"></div>
<div class="t" style="left:979px;top:532.80px;font-size:12px;color:#555;font-weight:normal;letter-spacing:0px;">Przypisz</div>
<div class="t" style="left:979px;top:562.80px;font-size:12px;color:#555;font-weight:normal;letter-spacing:0px;">Skasuj</div>
<div class="t" style="left:979px;top:593.80px;font-size:12px;color:#555;font-weight:normal;letter-spacing:0px;">Szukaj</div>
<div class="t" style="left:979px;top:622.80px;font-size:12px;color:#555;font-weight:normal;letter-spacing:0px;">Filtruj przypisane</div>
<div class="t" style="left:979px;top:652.80px;font-size:12px;color:#555;font-weight:normal;letter-spacing:0px;">Filtruj nieprzypisane</div>
<div class="t" style="left:979px;top:682.30px;font-size:12px;color:#555;font-weight:normal;letter-spacing:0px;">Kasuj filtr</div>
<div class="a" style="left:958px;top:518px;width:162px;height:192px;border:3px solid #e8111a"></div>
</body></html>
